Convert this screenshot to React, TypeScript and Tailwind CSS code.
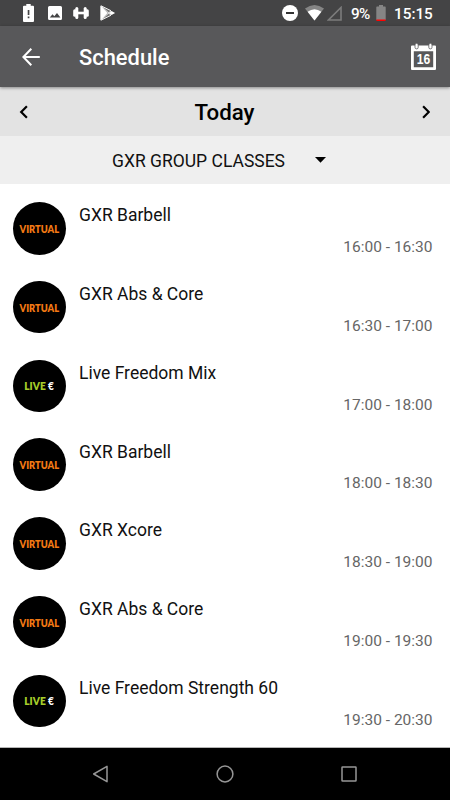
type Badge = "virtual" | "live";

interface GymClass {
  name: string;
  time: string;
  badge: Badge;
}

const classes: GymClass[] = [
  { name: "GXR Barbell", time: "16:00 - 16:30", badge: "virtual" },
  { name: "GXR Abs & Core", time: "16:30 - 17:00", badge: "virtual" },
  { name: "Live Freedom Mix", time: "17:00 - 18:00", badge: "live" },
  { name: "GXR Barbell", time: "18:00 - 18:30", badge: "virtual" },
  { name: "GXR Xcore", time: "18:30 - 19:00", badge: "virtual" },
  { name: "GXR Abs & Core", time: "19:00 - 19:30", badge: "virtual" },
  { name: "Live Freedom Strength 60", time: "19:30 - 20:30", badge: "live" },
];

const StatusBar = () => (
  <div className="flex h-[26px] shrink-0 items-center justify-between bg-[#444445] pr-[17px] pl-[23px] text-white">
    <div className="flex items-center">
      {/* Battery alert */}
      <svg width="11" height="18" viewBox="0 0 11 18" fill="currentColor">
        <path
          fillRule="evenodd"
          d="M3.3 0h4.4v1.7H10q1 0 1 1V17q0 1-1 1H1q-1 0-1-1V2.7q0-1 1-1h2.3zM4.7 6v5h1.7V6zM4.700 12.500v1.800h1.700v-1.800z"
        />
      </svg>
      {/* Picture */}
      <svg className="ml-[14px]" width="14" height="14" viewBox="0 0 14 14" fill="currentColor">
        <path
          fillRule="evenodd"
          d="M1.500 0h11Q14 0 14 1.500v11q0 1.500-1.500 1.500h-11Q0 14 0 12.500v-11Q0 0 1.500 0zM1.800 11.600h10.600L9 7 6.300 10.300 4.500 8.200z"
        />
      </svg>
      {/* Dumbbell */}
      <svg className="ml-[11px]" width="16" height="14" viewBox="0 0 16 14" fill="currentColor">
        <rect x="2.300" y="1" width="3" height="12" rx="1.500" />
        <rect x="10.700" y="1" width="3" height="12" rx="1.500" />
        <rect x="0.200" y="3.300" width="3.500" height="7.400" rx="1.500" />
        <rect x="12.300" y="3.300" width="3.500" height="7.400" rx="1.500" />
        <rect x="5" y="5.700" width="6" height="2.600" />
      </svg>
      {/* Play store */}
      <svg className="ml-[11px]" width="16" height="16" viewBox="0 0 16 16">
        <path d="M.5.500 15 8 .500 15.500z" fill="#777" />
        <path d="M.4.500v15L7.600 8z" fill="#fff" />
        <path
          d="M1 .800 11 5.700M1 15.200l10-4.900M1.300 1.200l9.500 8.800M1.300 14.800 10.800 6"
          stroke="#fff"
          strokeWidth="0.900"
        />
        <path d="M11.500 6 15 8l-3.500 2L9.300 8z" fill="#fff" />
      </svg>
    </div>

    <div className="flex items-center">
      {/* Do not disturb */}
      <svg width="16" height="16" viewBox="0 0 16 16">
        <circle cx="8" cy="8" r="8" fill="#fff" />
        <path d="M4 8h8" stroke="#333" strokeWidth="2" />
      </svg>
      {/* Wifi */}
      <svg className="ml-[7px]" width="19" height="16" viewBox="0 0 19 16">
        <path d="M0 3.500Q9.500-3.500 19 3.500L9.500 15.500z" fill="#858585" />
        <path d="M2.600 6.700q6.900-5 13.800 0l-6.900 8.800z" fill="#fff" />
      </svg>
      {/* Signal */}
      <svg className="ml-[3px]" width="15" height="15" viewBox="0 0 15 15">
        <path d="M14 1.500V14H1.500z" fill="none" stroke="#7c7c7c" strokeWidth="1.600" />
      </svg>
      <span className="ml-[9px] w-[20px] pt-px text-[15.300px] leading-[26px] font-medium tracking-[-0.600px] whitespace-nowrap">
        9%
      </span>
      <svg className="ml-[5px]" width="10" height="16" viewBox="0 0 10 16">
        <path d="M3 0h4v1.500h2q.700 0 .700.700V15H.300V2.200q0-.700.700-.700h2z" fill="#858585" />
        <path d="M.3 14.500h9.400V15q0 1-.700 1H1q-.700 0-.700-1z" fill="#f00" />
      </svg>
      <span className="ml-[8px] w-[39px] pt-px text-[15.300px] leading-[26px] font-medium whitespace-nowrap">
        15:15
      </span>
    </div>
  </div>
);

const Toolbar = () => (
  <header className="z-10 flex h-[61px] shrink-0 items-center bg-[#58585a] pr-[14px] pl-[22px] text-white shadow-[0_1px_3px_rgba(0,0,0,0.4)]">
    <button aria-label="Back">
      <svg width="18" height="18" viewBox="0 0 18 18" fill="none" stroke="currentColor" strokeWidth="2">
        <path d="M9.300.800 1.400 9l7.900 8.200M1.400 9h16.400" />
      </svg>
    </button>
    <h1 className="ml-[39px] pt-[2px] text-[21.900px] leading-[28px] font-medium">Schedule</h1>
    <button aria-label="Calendar" className="ml-auto">
      <svg width="25" height="28" viewBox="0 0 25 28">
        <path
          fillRule="evenodd"
          d="M1 2.500h23q1 0 1 1V26q0 1-1 1H1q-1 0-1-1V3.500q0-1 1-1zM2.800 8.300v15.900h19.400V8.300z"
          fill="#fff"
        />
        <rect x="4" y="0.300" width="3.200" height="5.600" rx="1.600" fill="#fff" stroke="#58585a" strokeWidth="0.800" />
        <rect x="17.800" y="0.300" width="3.200" height="5.600" rx="1.600" fill="#fff" stroke="#58585a" strokeWidth="0.800" />
        <text
          x="12.500"
          y="21"
          textAnchor="middle"
          textLength="13.500"
          lengthAdjust="spacingAndGlyphs"
          fontFamily="Liberation Sans, sans-serif"
          fontSize="14"
          fontWeight="700"
          fill="#fff"
        >
          16
        </text>
      </svg>
    </button>
  </header>
);

const ClassBadge = ({ badge }: { badge: Badge }) => (
  <div className="flex size-[52.500px] shrink-0 items-center justify-center rounded-full bg-black font-['Lato',sans-serif] text-[11px] leading-none font-extrabold whitespace-nowrap">
    {badge === "virtual" ? (
      <span className="scale-x-[0.85] text-[#f47a14]">VIRTUAL</span>
    ) : (
      <span className="scale-x-[0.92] text-[#a6ce2a]">
        LIVE <span className="font-black text-white">€</span>
      </span>
    )}
  </div>
);

const ClassRow = ({ item }: { item: GymClass }) => (
  <li className="flex h-[78.750px] items-center pr-[17.500px] pl-[13px]">
    <ClassBadge badge={item.badge} />
    <div className="ml-[13.500px] flex h-full flex-1 flex-col justify-between pt-[15.250px] pb-[10.750px]">
      <p className="text-[17.500px] leading-[22px] text-[#111]">{item.name}</p>
      <p className="text-right text-[15.500px] leading-[20px] text-[#666]">{item.time}</p>
    </div>
  </li>
);

const App = () => {
  return (
    <div className="flex h-[800px] w-[450px] flex-col overflow-hidden bg-white font-['Roboto',sans-serif]">
      <StatusBar />
      <Toolbar />

      {/* Day switcher */}
      <div className="flex h-[49px] shrink-0 items-center justify-between bg-[#e3e3e3] pr-[20px] pl-[19px] text-black">
        <button aria-label="Previous day">
          <svg width="10" height="14" viewBox="0 0 10 14" fill="none" stroke="currentColor" strokeWidth="2.200">
            <path d="M7.900 1.300 2.200 7l5.700 5.700" />
          </svg>
        </button>
        <h2 className="pt-px text-[22.300px] leading-[28px] font-medium">Today</h2>
        <button aria-label="Next day">
          <svg width="10" height="14" viewBox="0 0 10 14" fill="none" stroke="currentColor" strokeWidth="2.200">
            <path d="M3.100 1.300 8.800 7l-5.700 5.700" />
          </svg>
        </button>
      </div>

      {/* Category select */}
      <button className="flex h-[48px] shrink-0 items-center bg-[#efefef] pl-[112px] text-[17.500px] text-[#111]">
        <span className="pt-[2px]">GXR GROUP CLASSES</span>
        <svg className="ml-[30px]" width="11" height="6" viewBox="0 0 11 6">
          <path d="M0 0h11L5.500 5.700z" fill="#000" />
        </svg>
      </button>

      <ul className="flex-1 pt-[5px]">
        {classes.map((item, i) => (
          <ClassRow key={i} item={item} />
        ))}
      </ul>

      {/* System navigation */}
      <nav className="flex h-[53px] shrink-0 items-center justify-between border-t border-[#b5b5b5] bg-black px-[92px]">
        <svg width="18" height="18" viewBox="0 0 18 18" fill="none" stroke="#969696" strokeWidth="1.500">
          <path d="M15 1.300v15.400L1.700 9z" strokeLinejoin="round" />
        </svg>
        <svg width="18" height="18" viewBox="0 0 18 18" fill="none" stroke="#969696" strokeWidth="1.500">
          <circle cx="9" cy="9" r="7.900" />
        </svg>
        <svg width="18" height="18" viewBox="0 0 18 18" fill="none" stroke="#969696" strokeWidth="1.500">
          <rect x="2" y="2" width="14" height="14" rx="0.500" />
        </svg>
      </nav>
    </div>
  );
};

export default App;
